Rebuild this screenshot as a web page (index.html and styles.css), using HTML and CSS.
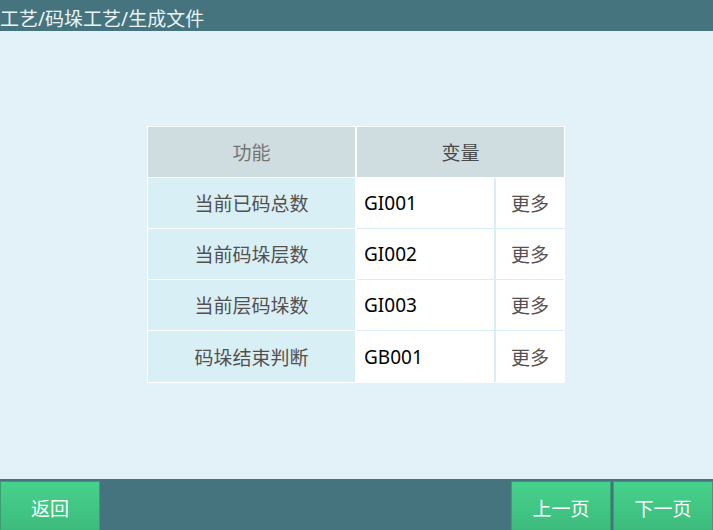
FILE: index.html
```html
<!DOCTYPE html>
<html lang="zh">
<head>
<meta charset="utf-8">
<link rel="stylesheet" href="styles.css">
</head>
<body>
<div class="app">
  <div class="titlebar">工艺/码垛工艺/生成文件</div>
  <div class="main">
    <div class="table">
      <div class="thead">
        <div class="th th-func">功能</div>
        <div class="th th-var">变量</div>
      </div>
      <div class="tbody">
        <div class="row">
          <div class="cell c-name">当前已码总数</div>
          <div class="cell c-val">GI001</div>
          <div class="cell c-more">更多</div>
        </div>
        <div class="row">
          <div class="cell c-name">当前码垛层数</div>
          <div class="cell c-val">GI002</div>
          <div class="cell c-more">更多</div>
        </div>
        <div class="row">
          <div class="cell c-name">当前层码垛数</div>
          <div class="cell c-val">GI003</div>
          <div class="cell c-more">更多</div>
        </div>
        <div class="row last">
          <div class="cell c-name">码垛结束判断</div>
          <div class="cell c-val">GB001</div>
          <div class="cell c-more">更多</div>
        </div>
      </div>
    </div>
  </div>
  <div class="footer">
    <div class="btn">返回</div>
    <div class="spacer"></div>
    <div class="btn">上一页</div>
    <div class="btn">下一页</div>
  </div>
</div>
</body>
</html>
```

FILE: styles.css
```css
* { box-sizing: border-box; }
html, body { margin: 0; padding: 0; }
body {
  font-family: "Noto Sans", "Noto Sans CJK SC", sans-serif;
  background: #e2f2f8;
}
.app {
  width: 713px;
  height: 530px;
  display: flex;
  flex-direction: column;
  overflow: hidden;
}
.titlebar {
  height: 31px;
  flex: 0 0 31px;
  background: #45737e;
  color: #eaf5f8;
  font-size: 19px;
  line-height: 19px;
  padding-top: 10px;
  padding-left: 0;
  white-space: nowrap;
}
.main {
  flex: 1;
  display: flex;
  align-items: flex-start;
  justify-content: flex-start;
  padding: 95px 0 0 147px;
}
.table {
  width: 418px;
  background: #ffffff;
  padding: 1px;
  font-size: 19px;
}
.thead {
  display: flex;
  height: 51px;
  border-bottom: 1px solid #ffffff;
}
.th {
  background: #cfdce0;
  display: flex;
  align-items: center;
  justify-content: center;
  height: 50px;
}
.th-func { width: 207px; margin-right: 2px; color: #747474; }
.th-var { width: 207px; color: #4a4a4a; }
.row {
  display: flex;
  height: 51px;
}
.cell {
  height: 51px;
  display: flex;
  align-items: center;
}
.c-name {
  width: 209px;
  background: #d9eff6;
  border-right: 2px solid #ffffff;
  border-bottom: 1px solid #ffffff;
  justify-content: center;
  color: #555050;
}
.c-val {
  width: 139px;
  background: #ffffff;
  border-right: 2px solid #d6eef5;
  border-bottom: 1px solid #d6eef5;
  padding-left: 7px;
  color: #000000;
}
.c-more {
  width: 68px;
  background: #ffffff;
  border-bottom: 1px solid #d6eef5;
  justify-content: center;
  color: #555050;
}
.row.last .cell { border-bottom: none; }
.footer {
  height: 51px;
  flex: 0 0 51px;
  background: #45737e;
  display: flex;
  padding-top: 2px;
  gap: 2px;
}
.spacer { flex: 1; }
.btn {
  width: 100px;
  height: 54px;
  background: linear-gradient(#46d28c, #3cb97b);
  border: 1px solid #3b9e70;
  color: #ffffff;
  font-size: 19px;
  display: flex;
  align-items: center;
  justify-content: center;
}
```
